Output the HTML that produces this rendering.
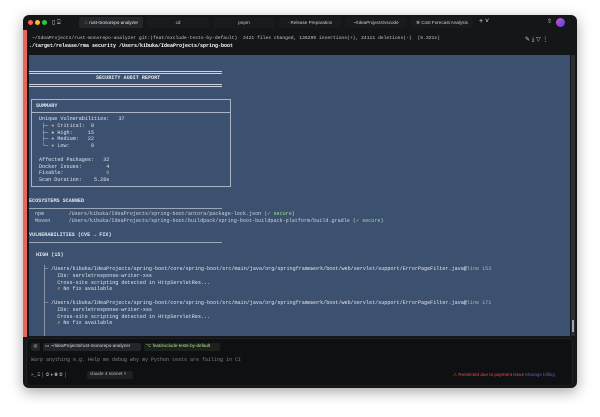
<!DOCTYPE html>
<html><head><style>
*{margin:0;padding:0;box-sizing:border-box}
body{width:600px;height:417px;background:#fff;position:relative;overflow:hidden;font-family:"Liberation Mono",monospace}
.win{position:absolute;left:23px;top:15px;width:554px;height:373px;background:#141618;border-radius:6px;box-shadow:0 4px 14px rgba(0,0,0,.35);overflow:hidden}
.t{position:absolute;white-space:pre;font-size:5.1px;line-height:6.8px;color:#dfe4ec}
.s{font-family:"Liberation Sans",sans-serif;font-size:4.6px;color:#c9ccd0;position:absolute;white-space:pre}
.b{font-weight:bold}
.hl{position:absolute;height:1px;background:#c9d2de}
.dot{position:absolute;width:5px;height:5px;border-radius:50%;top:5px}
.tab{position:absolute;top:2px;height:11px;border-radius:2px;text-align:center;line-height:11px}
</style></head><body>
<div class="win">
 <div class="dot" style="left:5px;background:#fe5f57"></div>
 <div class="dot" style="left:12px;background:#febc2e"></div>
 <div class="dot" style="left:19px;background:#28c840"></div>
 <div class="s" style="left:29px;top:4px;font-size:6px;color:#ccc">▯ ⍓</div>
 <div class="tab s" style="left:56px;width:64px;background:#23262a;color:#e6e6e6"><span style="color:#e5534b">⚠</span> rust-monorepo-analyzer</div>
 <div class="tab s" style="left:124px;width:62px;background:#181a1d">cd</div>
 <div class="tab s" style="left:190px;width:62px;background:#181a1d">pnpm</div>
 <div class="tab s" style="left:256px;width:62px;background:#181a1d">· Release Preparation</div>
 <div class="tab s" style="left:322px;width:62px;background:#181a1d">~/IdeaProjects/vscode</div>
 <div class="tab s" style="left:388px;width:62px;background:#181a1d">✻ Cost Forecast Analysis</div>
 <div class="s" style="left:456px;top:3px;font-size:7px;color:#ddd">+ ˅</div>
 <div class="s" style="left:524px;top:3px;font-size:6px;color:#ddd">⇧</div>
 <div style="position:absolute;left:533px;top:3px;width:9px;height:9px;border-radius:50%;background:linear-gradient(135deg,#e24ad6,#3b4bd8)"></div>
 <div style="position:absolute;left:0;top:15px;width:4px;height:307px;background:#e8665a"></div>
 <div class="t" style="left:9px;top:21px;color:#c5c9ce;font-size:4.7px">~/IdeaProjects/rust-monorepo-analyzer git:(feat/exclude-tests-by-default)  2421 files changed, 136299 insertions(+), 24111 deletions(-)  (5.321s)</div>
 <div class="t b" style="left:6px;top:28px;color:#fff;font-size:5px">./target/release/rma security /Users/kibuka/IdeaProjects/spring-boot</div>
 <div class="s" style="left:502px;top:21px;font-size:6px;color:#ccc">✎ ⤓ ▽ ⋮</div>
 <div style="position:absolute;left:6px;top:40px;width:541px;height:281px;background:#3c5170"></div>
 <div style="position:absolute;left:548px;top:40px;width:4px;height:281px;background:#2a2d31"></div>
 <div style="position:absolute;left:549px;top:305px;width:2px;height:12px;background:#9aa3ad"></div>

 <div class="hl" style="left:6px;top:56px;width:193px"></div>
 <div class="hl" style="left:6px;top:58px;width:193px"></div>
 <div class="t b" style="left:73px;top:60px">SECURITY AUDIT REPORT</div>
 <div class="hl" style="left:6px;top:69px;width:193px"></div>
 <div class="hl" style="left:6px;top:71px;width:193px"></div>

 <div style="position:absolute;left:8px;top:84px;width:200px;height:88px;border:1px solid #aab4c2"></div>
 <div class="hl" style="left:8px;top:97px;width:200px;background:#aab4c2"></div>
 <div class="t b" style="left:13px;top:88px">SUMMARY</div>
 <div class="t" style="left:16px;top:101px">Unique Vulnerabilities:   37
 ├─ <span style="color:#e58a7a">●</span> Critical:  0
 ├─ <span style="color:#e8c070">●</span> High:     15
 ├─ <span style="color:#8fb4e8">●</span> Medium:   22
 └─ <span style="color:#9aa">●</span> Low:       0

Affected Packages:   32
Docker Issues:        4
Fixable:              <span style="color:#7fd46f">0</span>
Scan Duration:    5.28s</div>

 <div class="t b" style="left:6px;top:183px">ECOSYSTEMS SCANNED</div>
 <div class="hl" style="left:6px;top:193px;width:193px;background:#9aa7b8"></div>
 <div class="t" style="left:12px;top:196px;color:#c8d2e0">npm        /Users/kibuka/IdeaProjects/spring-boot/antora/package-lock.json (<span style="color:#9ee07e">✓ secure</span>)
Maven      /Users/kibuka/IdeaProjects/spring-boot/buildpack/spring-boot-buildpack-platform/build.gradle (<span style="color:#9ee07e">✓ secure</span>)</div>

 <div class="t b" style="left:6px;top:217px">VULNERABILITIES (CVE → FIX)</div>
 <div class="hl" style="left:6px;top:227px;width:193px;background:#9aa7b8"></div>
 <div class="t b" style="left:13px;top:237px">HIGH (15)</div>
 <div style="position:absolute;left:21px;top:250px;width:1px;height:71px;background:#8a96a8"></div>
 <div class="t" style="left:22px;top:251px">─ /Users/kibuka/IdeaProjects/spring-boot/core/spring-boot/src/main/java/org/springframework/boot/web/servlet/support/ErrorPageFilter.java@<span style="color:#aab3c0">line 153</span>
    IDs: servletresponse-writer-xss
    Cross-site scripting detected in HttpServletRes...
    <span style="color:#e8a060">✗</span> No fix available

─ /Users/kibuka/IdeaProjects/spring-boot/core/spring-boot/src/main/java/org/springframework/boot/web/servlet/support/ErrorPageFilter.java@<span style="color:#aab3c0">line 171</span>
    IDs: servletresponse-writer-xss
    Cross-site scripting detected in HttpServletRes...
    <span style="color:#e8a060">✗</span> No fix available</div>

 <div style="position:absolute;left:3px;top:323px;width:547px;height:48px;background:#0e1012;border-radius:4px;border:1px solid #1d2024"></div>
 <div class="s" style="left:8px;top:328px;width:9px;height:8px;background:#22252a;border-radius:2px;text-align:center">◎</div>
 <div class="s" style="left:20px;top:328px;width:98px;height:8px;background:#22252a;border-radius:2px;color:#d8dadc;padding-left:2px">▭ ~/IdeaProjects/rust-monorepo-analyzer</div>
 <div class="s" style="left:121px;top:328px;width:76px;height:8px;background:#1c211d;border-radius:2px;color:#a8e08a;padding-left:2px">⌥ feat/exclude-tests-by-default</div>
 <div class="t" style="left:8px;top:342px;color:#7d8186;font-size:5px">Warp anything e.g. Help me debug why my Python tests are failing in CI</div>
 <div class="s" style="left:8px;top:357px;color:#aaa">&gt;_ ⍓ │ ◎ ♦ ◉ ◎ │</div>
 <div class="s" style="left:64px;top:356px;width:46px;height:8px;background:#1c1f23;border-radius:2px;color:#bbb;padding-left:3px">claude 4 sonnet ˅</div>
 <div class="s" style="left:430px;top:357px;color:#e5534b">⚠ Restricted due to payment issue <span style="color:#5a62c8">Manage billing</span></div>
</div>
</body></html>
